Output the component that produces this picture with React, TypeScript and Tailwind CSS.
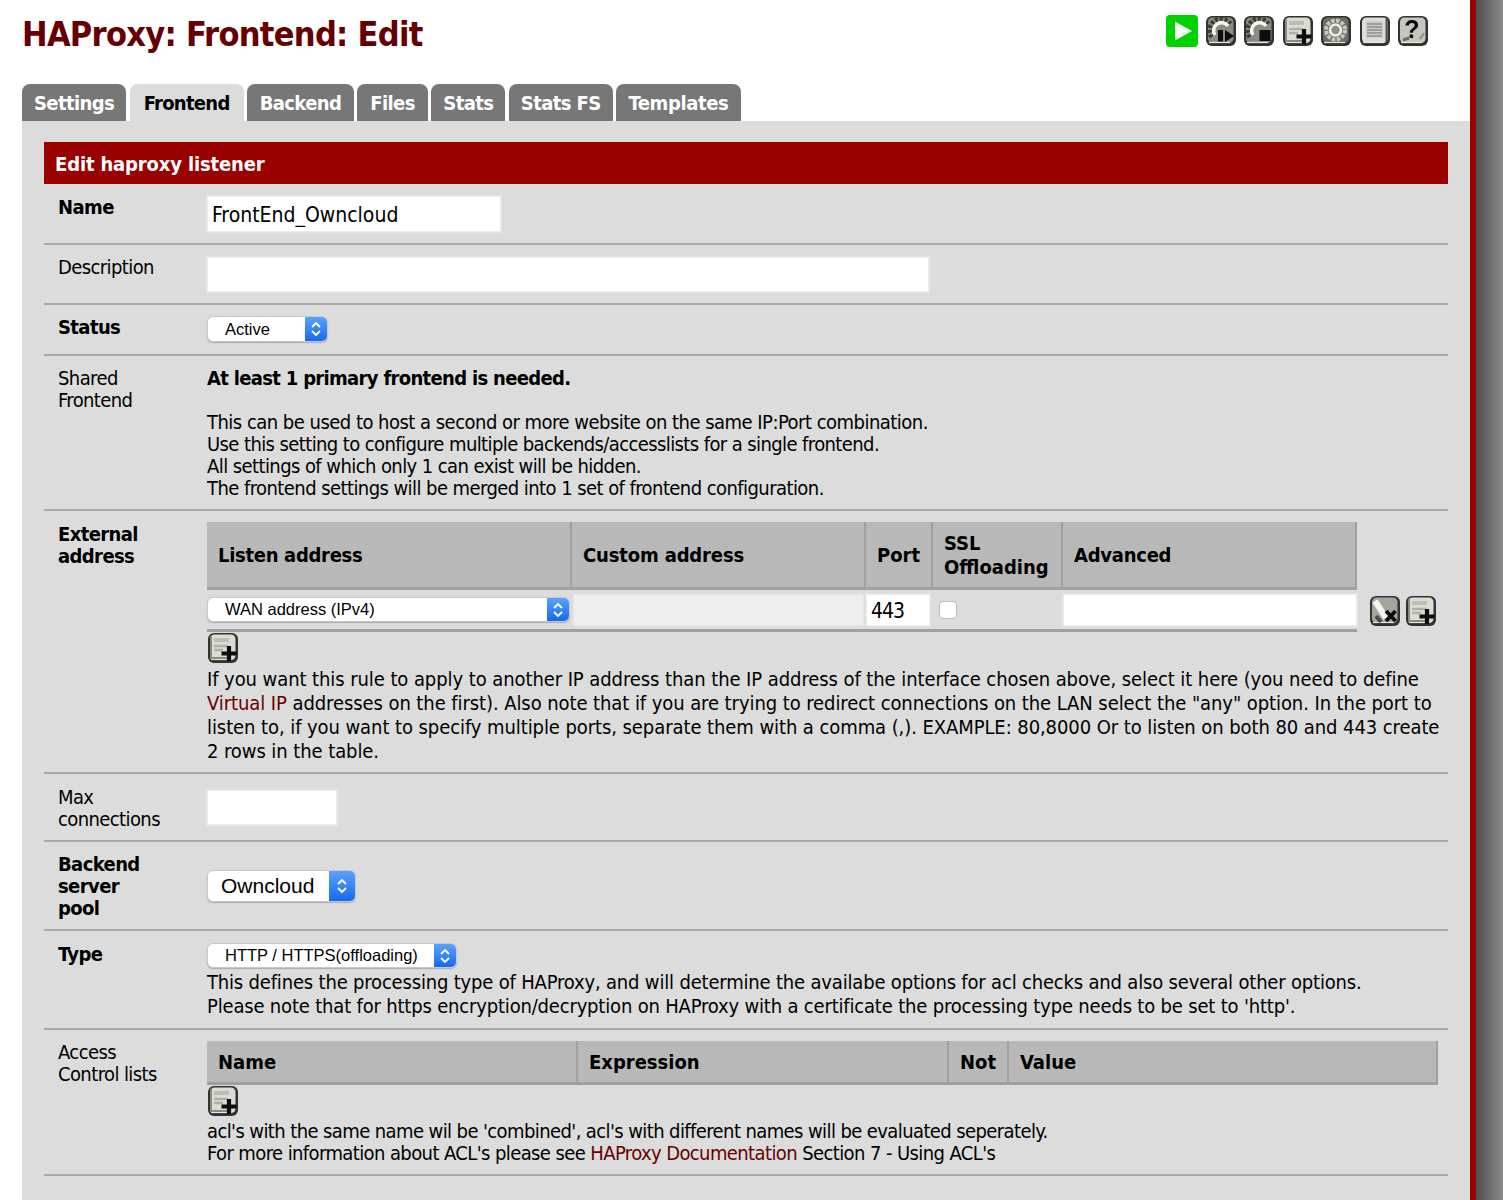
import React from "react";

const font = "font-['DejaVu_Sans_Condensed','DejaVu_Sans',sans-serif]";

// beveled pfSense style button, slightly blurred because the original is an upscaled bitmap
function IconBase({ children, fill = "#8b8b84" }: { children?: React.ReactNode; fill?: string }) {
    return (
        <svg width="32" height="32" viewBox="0 0 32 32" className="shrink-0">
            <defs>
                <filter id="soft" x="-10%" y="-10%" width="120%" height="120%">
                    <feGaussianBlur stdDeviation="0.55" />
                </filter>
            </defs>
            <g filter="url(#soft)">
                <rect x="1" y="1" width="30" height="30" rx="6" fill="#33332f" />
                <rect x="3" y="2.5" width="25.5" height="25.5" rx="4.5" fill={fill} />
                <path d="M4 27.5h21" stroke="#e8e8d8" strokeWidth="1.2" />
                {children}
            </g>
        </svg>
    );
}

function GearArc() {
    return (
        <g fill="none">
            <path d="M7 22A10.5 10.5 0 0 1 25 9" stroke="#3d3d39" strokeWidth="5.5" strokeDasharray="3 1.6" />
            <path d="M10 20A7.5 7.5 0 0 1 23 11" stroke="#f5f5ef" strokeWidth="3.6" />
        </g>
    );
}

function ActionIcon({ kind }: { kind: string }) {
    if (kind === "play") {
        return (
            <svg width="32" height="32" viewBox="0 0 32 32" className="shrink-0">
                <rect width="32" height="32" rx="4" fill="#00d200" />
                <path d="M9 6.5l17 9.5-17 9.5z" fill="#f4fff4" />
            </svg>
        );
    }
    if (kind === "add") {
        return (
            <IconBase fill="#dcdcd5">
                <path d="M4 4v22h18" fill="none" stroke="#8a8a84" strokeWidth="2" />
                <rect x="7" y="6" width="15" height="4" fill="#bdbdb6" />
                <path d="M7 14h14M7 18h9" stroke="#b0b0a9" strokeWidth="2.4" />
                <path d="M22 14v15M14.5 21.5h15" stroke="#0c0c0c" strokeWidth="4.2" />
            </IconBase>
        );
    }
    if (kind === "gear") {
        return (
            <IconBase fill="#6e6e68">
                <circle cx="15.5" cy="15" r="9.5" fill="none" stroke="#c9c9c2" strokeWidth="4" strokeDasharray="3.6 1.4" />
                <circle cx="15.5" cy="15" r="5.5" fill="#8f8f88" stroke="#f0f0ea" strokeWidth="2.6" />
            </IconBase>
        );
    }
    if (kind === "start") {
        return (
            <IconBase>
                <GearArc />
                <rect x="13" y="15" width="5" height="11.5" fill="#0c0c0c" />
                <path d="M20 15l9 6-9 6z" fill="#0c0c0c" />
            </IconBase>
        );
    }
    if (kind === "stop") {
        return (
            <IconBase>
                <GearArc />
                <rect x="16.5" y="15" width="11" height="11" fill="#0c0c0c" />
            </IconBase>
        );
    }
    if (kind === "delete") {
        return (
            <IconBase fill="#a5a59e">
                <path d="M6 6l11 17" stroke="#f5f5ef" strokeWidth="6" />
                <path d="M7 21l5 6" stroke="#4d4d48" strokeWidth="4" />
                <path d="M17 16l9.5 10M26.5 16L17 26" stroke="#0c0c0c" strokeWidth="3.8" />
            </IconBase>
        );
    }
    if (kind === "list") {
        return (
            <IconBase fill="#deded8">
                <rect x="7" y="6" width="17" height="17" fill="#cfcfc8" />
                <path d="M8 9h15M8 12h15M8 15h15M8 18h15M8 21h15" stroke="#8f8f88" strokeWidth="1.4" />
                <path d="M27.5 4v23" stroke="#55554f" strokeWidth="2" />
            </IconBase>
        );
    }
    return (
        <IconBase fill="#c6c6bf">
            <path d="M6 25l6-2" stroke="#6b6b65" strokeWidth="3" />
            <path d="M23 24l4-6" stroke="#8c8c86" strokeWidth="2" />
            <text x="15" y="23" textAnchor="middle" fontSize="25" fontWeight="700" fontFamily="'Liberation Sans',sans-serif" fill="#0c0c0c">?</text>
        </IconBase>
    );
}

function Stepper({ width }: { width: string }) {
    return (
        <span className={`${width} h-full flex items-center justify-center bg-gradient-to-b from-[#5aa2fb] to-[#1468f0]`}>
            <svg width="12" height="18" viewBox="0 0 12 18" fill="none" stroke="#fff" strokeWidth="1.8">
                <path d="M2 7l4-4 4 4M2 11l4 4 4-4" />
            </svg>
        </span>
    );
}

function FakeSelect({ label, className, big }: { label: string; className: string; big?: boolean }) {
    return (
        <div className={`flex items-stretch rounded-[6px] overflow-hidden bg-white border border-[#c8c8c8] shadow-[0_1px_1px_#aaa] font-['Liberation_Sans',sans-serif] text-black ${className}`}>
            <span className={`flex-1 flex items-center whitespace-nowrap ${big ? "pl-[13px] text-[21px]" : "pl-[17px] text-[16.5px]"}`}>{label}</span>
            <Stepper width={big ? "w-[26px]" : "w-[22px]"} />
        </div>
    );
}

function TextBox({ value = "", className }: { value?: string; className: string }) {
    return (
        <input
            readOnly
            value={value}
            className={`bg-white border border-[#ececec] shadow-[0_0_0_1px_#e4e4e4] outline-none px-[4px] pt-[2px] text-[21px] text-black ${font} ${className}`}
        />
    );
}

function Row({ label, bold, height, top = "pt-[11px]", children }: { label: React.ReactNode; bold?: boolean; height: string; top?: string; children?: React.ReactNode }) {
    return (
        <div className={`flex border-b-2 border-[#a8a8a8] ${height}`}>
            <div className={`w-[163px] shrink-0 pl-[14px] leading-[22px] tracking-[-0.6px] ${top} ${bold ? "font-bold" : ""}`}>{label}</div>
            <div className="flex-1 min-w-0">{children}</div>
        </div>
    );
}

function HeadCell({ className, children }: { className: string; children: React.ReactNode }) {
    return <div className={`flex items-center pl-[11px] pt-[1px] font-bold leading-[24px] border-r-2 border-[#a0a0a0] ${className}`}>{children}</div>;
}

const tabs = [
    { name: "Settings", cls: "bg-[#777777] text-white px-[12px] tracking-[-0.6px]" },
    { name: "Frontend", cls: "bg-[#dcdcdc] text-black px-[14px] tracking-[-0.7px]" },
    { name: "Backend", cls: "bg-[#777777] text-white px-[12.5px] tracking-[-0.6px]" },
    { name: "Files", cls: "bg-[#777777] text-white px-[13px] tracking-[-0.6px]" },
    { name: "Stats", cls: "bg-[#777777] text-white px-[12px] tracking-[-0.6px]" },
    { name: "Stats FS", cls: "bg-[#777777] text-white px-[12px] tracking-[-0.6px]" },
    { name: "Templates", cls: "bg-[#777777] text-white px-[12.5px] tracking-[-0.4px]" },
];
const toolbar = ["play", "start", "stop", "add", "gear", "list", "help"];

export default function App() {
    return (
        <div className={`flex h-[1200px] overflow-hidden bg-white text-black text-[20px] ${font}`}>
            <div className="w-[1470px] shrink-0 flex flex-col">
                {/* Header */}
                <div className="h-[84px] flex justify-between pl-[22px] pr-[41px]">
                    <h1 className="mt-[10px] text-[34px] leading-[48px] font-bold tracking-[-0.7px] text-[#660000]">HAProxy: Frontend: Edit</h1>
                    <div className="flex gap-[6.5px] pt-[15px] h-fit">
                        {toolbar.map((k) => <ActionIcon key={k} kind={k} />)}
                    </div>
                </div>

                {/* Tabs */}
                <div className="flex gap-[3.5px] pl-[22px] h-[37px]">
                    {tabs.map((t) => (
                        <div key={t.name} className={`flex items-center rounded-t-[8px] font-bold ${t.cls}`}>
                            {t.name}
                        </div>
                    ))}
                </div>

                {/* Content */}
                <div className="ml-[22px] flex-1 bg-[#dcdcdc] pt-[21px] pl-[22px] pr-[22px]">
                    <div className="h-[42px] flex items-center pl-[11px] pt-[2px] bg-[#990000] text-white font-bold tracking-[-0.15px]">Edit haproxy listener</div>

                    <Row label="Name" bold height="h-[61px]" top="pt-[12px]">
                        <TextBox value="FrontEnd_Owncloud" className="mt-[12px] w-[294px] h-[36px]" />
                    </Row>
                    <Row label="Description" height="h-[60px]">
                        <TextBox className="mt-[12px] w-[722px] h-[35px]" />
                    </Row>
                    <Row label="Status" bold height="h-[51px]">
                        <FakeSelect label="Active" className="mt-[11px] w-[121px] h-[26px]" />
                    </Row>
                    <Row label={<>Shared<br />Frontend</>} height="h-[155px]">
                        <div className="pt-[11px] leading-[22px] tracking-[-0.52px]">
                            <div className="font-bold tracking-[-0.68px]">At least 1 primary frontend is needed.</div>
                            <div className="mt-[22px]">
                                This can be used to host a second or more website on the same IP:Port combination.<br />
                                <span className="tracking-[-0.6px]">Use this setting to configure multiple backends/accesslists for a single frontend.</span><br />
                                <span className="tracking-[-0.58px]">All settings of which only 1 can exist will be hidden.</span><br />
                                <span className="tracking-[-0.57px]">The frontend settings will be merged into 1 set of frontend configuration.</span>
                            </div>
                        </div>
                    </Row>

                    <Row label={<>External<br />address</>} bold height="h-[263px]" top="pt-[12px]">
                        <div className="pt-[11px]">
                            <div className="flex">
                                <div className="w-[1150px] shrink-0">
                                    <div className="flex h-[68px] bg-[#b8b8b8] border-b-[3px] border-[#a0a0a0]">
                                        <HeadCell className="w-[365px] tracking-[-0.3px]">Listen address</HeadCell>
                                        <HeadCell className="w-[294px] tracking-[-0.15px]">Custom address</HeadCell>
                                        <HeadCell className="w-[67px]">Port</HeadCell>
                                        <HeadCell className="w-[130px]"><span>SSL<br />Offloading</span></HeadCell>
                                        <HeadCell className="flex-1 tracking-[-0.25px]">Advanced</HeadCell>
                                    </div>
                                    <div className="flex items-center h-[42px] border-b-[3px] border-[#a0a0a0]">
                                        <FakeSelect label="WAN address (IPv4)" className="w-[363px] h-[25px] shrink-0" />
                                        <div className="ml-[3px] w-[291px] h-[32px] bg-[#eeeeee] border border-[#e6e6e6]" />
                                        <TextBox value="443" className="ml-[2px] w-[64px] h-[32px] tracking-[-1px]" />
                                        <span className="ml-[9px] w-[18px] h-[18px] rounded-[4px] bg-white border border-[#bdbdbd]" />
                                        <TextBox className="ml-[106px] flex-1 min-w-0 h-[32px]" />
                                    </div>
                                </div>
                                <div className="flex gap-[4px] ml-[12px] mt-[73px] h-fit">
                                    <ActionIcon kind="delete" />
                                    <ActionIcon kind="add" />
                                </div>
                            </div>
                            <ActionIcon kind="add" />
                            <p className="mt-[3px] leading-[24px] tracking-[-0.08px]">
                                If you want this rule to apply to another IP address than the IP address of the interface chosen above, select it here (you need to define{" "}
                                <span className="text-[#660000]">Virtual IP</span> addresses on the first). Also note that if you are trying to redirect connections on the LAN select the "any" option. In the port to listen to, if you want to specify multiple ports, separate them with a comma (,). EXAMPLE: 80,8000 Or to listen on both 80 and 443 create 2 rows in the table.
                            </p>
                        </div>
                    </Row>

                    <Row label={<>Max<br />connections</>} height="h-[68px]" top="pt-[12px]">
                        <TextBox className="mt-[16px] w-[130px] h-[35px]" />
                    </Row>
                    <Row label={<>Backend<br />server<br />pool</>} bold height="h-[89px]">
                        <FakeSelect big label="Owncloud" className="mt-[28px] w-[149px] h-[32px]" />
                    </Row>
                    <Row label="Type" bold height="h-[99px]" top="pt-[12px]">
                        <FakeSelect label="HTTP / HTTPS(offloading)" className="mt-[12px] w-[250px] h-[25px]" />
                        <p className="mt-[2px] leading-[24px] tracking-[-0.18px]">
                            This defines the processing type of HAProxy, and will determine the availabe options for acl checks and also several other options.<br />
                            Please note that for https encryption/decryption on HAProxy with a certificate the processing type needs to be set to 'http'.
                        </p>
                    </Row>
                    <Row label={<>Access<br />Control lists</>} height="h-[146px]" top="pt-[11px]">
                        <div className="pt-[11px]">
                            <div className="flex w-[1231px] h-[44px] bg-[#b8b8b8] border-b-[3px] border-[#a0a0a0]">
                                <HeadCell className="w-[371px]">Name</HeadCell>
                                <HeadCell className="w-[371px]">Expression</HeadCell>
                                <HeadCell className="w-[60px]">Not</HeadCell>
                                <HeadCell className="flex-1">Value</HeadCell>
                            </div>
                            <div className="h-[31px]"><ActionIcon kind="add" /></div>
                            <p className="mt-[4px] leading-[22px] tracking-[-0.6px]">
                                acl's with the same name wil be 'combined', acl's with different names will be evaluated seperately.<br />
                                For more information about ACL's please see <span className="text-[#660000]">HAProxy Documentation</span> Section 7 - Using ACL's
                            </p>
                        </div>
                    </Row>
                </div>
            </div>

            {/* Window edge */}
            <div className="flex-1 flex">
                <div className="w-[6px] bg-[#990000]" />
                <div className="flex-1 bg-gradient-to-r from-[#4f4f4f] to-[#8c8c8c]" />
            </div>
        </div>
    );
}
